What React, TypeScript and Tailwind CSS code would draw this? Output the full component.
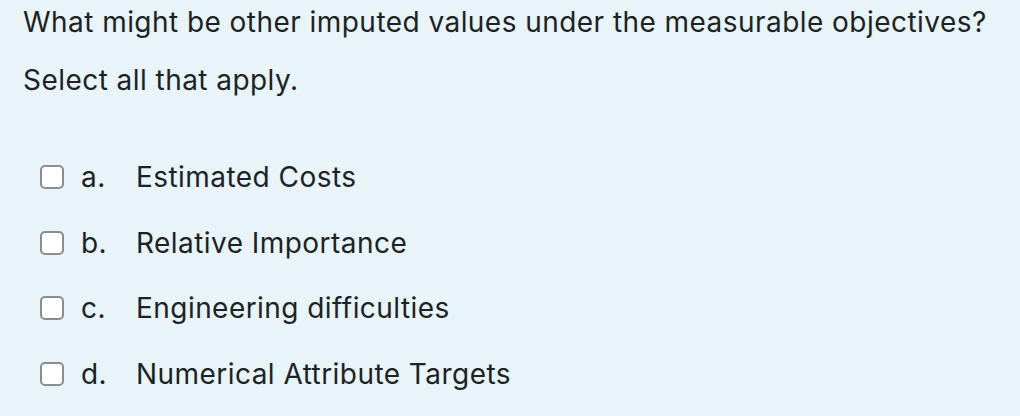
export default function App() {
  const options = [
    { letter: "a.", text: "Estimated Costs" },
    { letter: "b.", text: "Relative Importance" },
    { letter: "c.", text: "Engineering difficulties" },
    { letter: "d.", text: "Numerical Attribute Targets" },
  ];

  return (
    <div className="w-[1020px] h-[416px] bg-[#e8f4f7] text-[#1b2327] font-['Inter',sans-serif] tracking-[0.45px] overflow-hidden">
      <div className="pl-[23px] pt-[4px]">
        <p className="text-[28px] leading-[36px]">
          What might be other imputed values under the measurable objectives?
        </p>
        <p className="text-[28px] leading-[36px] mt-[22px]">Select all that apply.</p>
      </div>

      <div className="flex flex-col pl-[40px] mt-[61px] gap-[29.5px]">
        {options.map((o) => (
          <label key={o.letter} className="flex items-center h-[36px]">
            <span className="w-[24px] h-[24px] rounded-[5px] border-2 border-[#8a8d8f] bg-white shrink-0" />
            <span className="text-[28px] ml-[17px] w-[55px]">{o.letter}</span>
            <span className="text-[28px]">{o.text}</span>
          </label>
        ))}
      </div>
    </div>
  );
}
